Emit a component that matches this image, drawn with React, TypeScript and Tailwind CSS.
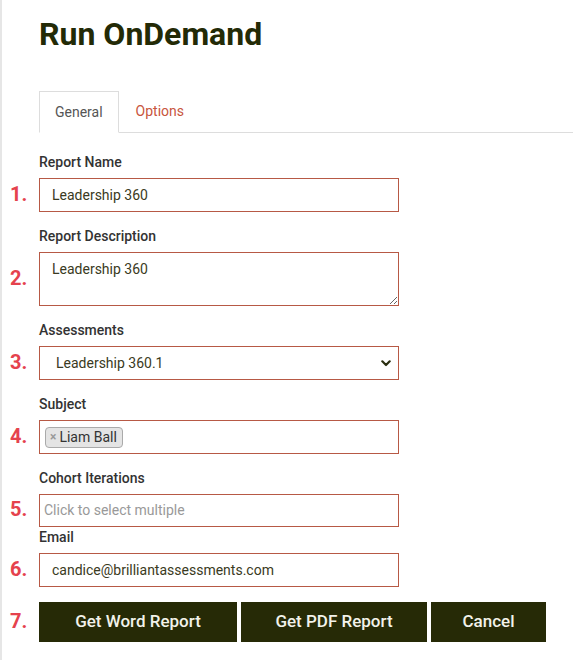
import React from "react";

function Num({ n }: { n: number }) {
  return (
    <span className="w-[37px] shrink-0 pl-[8px] mb-[3px] text-[20px] leading-none font-bold text-[#e5424d]">
      {n}.
    </span>
  );
}

function Label({ children }: { children: React.ReactNode }) {
  return (
    <div className="pl-[37px] mb-[6px] text-[14px] leading-[20px] font-medium text-[#333333]">
      {children}
    </div>
  );
}

export default function App() {
  return (
    <div className="min-h-[660px] border-l-2 border-[#e6e6e6] bg-white font-['Roboto',sans-serif]">
      <div className="pl-[37px] pt-[15px]">
        <h1 className="text-[32px] leading-[38px] font-bold text-[#232a06]">Run OnDemand</h1>
        <div className="mt-[38px] flex border-b border-[#dddddd]">
          <div className="h-[42px] -mb-px flex items-center border border-[#dddddd] border-b-white bg-white px-[15px] text-[14px] text-[#555555]">
            General
          </div>
          <div className="h-[41px] flex items-center border border-transparent px-[16px] text-[14px] text-[#c8553d]">
            Options
          </div>
        </div>
      </div>

      <div className="mt-[19px]">
        <Label>Report Name</Label>
        <div className="flex items-center mb-[14px]">
          <Num n={1} />
          <div className="w-[360px] h-[34px] border border-[#b75945] flex items-center pl-[12px] text-[14px] text-[#3a3a22]">
            Leadership 360
          </div>
        </div>

        <Label>Report Description</Label>
        <div className="flex items-center mb-[14px]">
          <Num n={2} />
          <textarea
            defaultValue="Leadership 360"
            className="block w-[360px] h-[54px] border border-[#b75945] pl-[12px] pt-[7px] text-[14px] leading-[18px] text-[#3a3a22] outline-none resize-y font-['Roboto',sans-serif]"
          />
        </div>

        <Label>Assessments</Label>
        <div className="flex items-center mb-[14px]">
          <Num n={3} />
          <div className="w-[360px] h-[34px] border border-[#b75945] flex items-center justify-between pl-[16px] pr-[4px] text-[14px] text-[#3a3a22]">
            <span>Leadership 360.1</span>
            <svg width="10" height="7" viewBox="0 0 10 7" className="mr-[3px]">
              <path d="M1.3 1.3 L5 5 L8.7 1.3" fill="none" stroke="#2a2e10" strokeWidth="2.2" strokeLinecap="round" strokeLinejoin="round" />
            </svg>
          </div>
        </div>

        <Label>Subject</Label>
        <div className="flex items-center mb-[14px]">
          <Num n={4} />
          <div className="w-[360px] h-[34px] border border-[#b75945] flex items-center pl-[5px]">
            <span className="h-[21px] flex items-center rounded-[4px] border border-[#aaaaaa] bg-[#e4e4e4] pl-[4px] pr-[5px] text-[14px] text-[#333333]">
              <span className="text-[12px] font-bold text-[#999999] mr-[3px]">×</span>
              Liam Ball
            </span>
          </div>
        </div>

        <Label>Cohort Iterations</Label>
        <div className="flex items-center">
          <Num n={5} />
          <div className="w-[360px] h-[33px] border border-[#b75945] flex items-center pl-[4px] text-[14px] text-[#999999]">
            Click to select multiple
          </div>
        </div>

        <Label>Email</Label>
        <div className="flex items-center">
          <Num n={6} />
          <div className="w-[360px] h-[34px] border border-[#b75945] flex items-center pl-[12px] text-[14px] text-[#3a3a22]">
            candice@brilliantassessments.com
          </div>
        </div>

        <div className="flex items-center mt-[15px]">
          <Num n={7} />
          <div className="flex gap-[4px]">
            <button className="w-[198px] h-[40px] bg-[#262a06] text-[17px] font-medium text-[#f2f2ea]">Get Word Report</button>
            <button className="w-[186px] h-[40px] bg-[#262a06] text-[17px] font-medium text-[#f2f2ea]">Get PDF Report</button>
            <button className="w-[115px] h-[40px] bg-[#262a06] text-[17px] font-medium text-[#f2f2ea]">Cancel</button>
          </div>
        </div>
      </div>
    </div>
  );
}
